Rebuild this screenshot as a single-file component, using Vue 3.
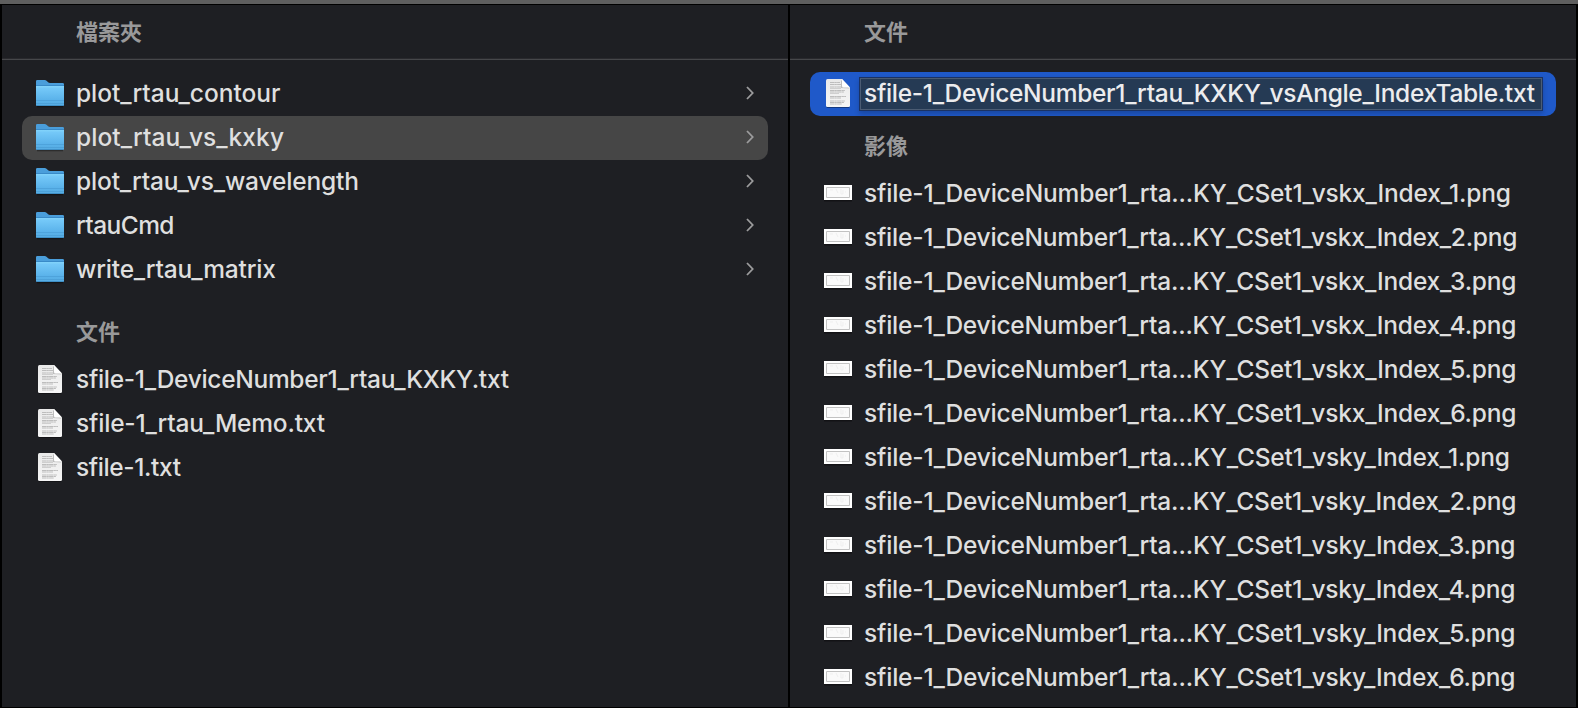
<script setup>
const folders = [
  { name: 'plot_rtau_contour', w: 204.5 },
  { name: 'plot_rtau_vs_kxky', w: 208, active: true },
  { name: 'plot_rtau_vs_wavelength', w: 283 },
  { name: 'rtauCmd', w: 98.5 },
  { name: 'write_rtau_matrix', w: 200 },
]
const documents = [
  { name: 'sfile-1_DeviceNumber1_rtau_KXKY.txt', w: 433 },
  { name: 'sfile-1_rtau_Memo.txt', w: 249 },
  { name: 'sfile-1.txt', w: 105 },
]
const selected = { name: 'sfile-1_DeviceNumber1_rtau_KXKY_vsAngle_IndexTable.txt', w: 671 }
const images = ['vskx', 'vsky'].flatMap((axis) =>
  [1, 2, 3, 4, 5, 6].map((n) => ({
    name: `sfile-1_DeviceNumber1_rta...KY_CSet1_${axis}_Index_${n}.png`,
    w: (n === 1 ? 647 : n === 2 ? 653.5 : 652.5) - (axis === 'vsky' ? 1 : 0),
  })),
)
</script>

<template>
  <div class="window">
    <svg class="defs" width="0" height="0" aria-hidden="true">
      <defs>
        <linearGradient id="front" x1="0" y1="0" x2="0" y2="1">
          <stop offset="0" stop-color="#83d4fb" />
          <stop offset=".12" stop-color="#74c8f8" />
          <stop offset=".7" stop-color="#5ab2ea" />
          <stop offset="1" stop-color="#57ace2" />
        </linearGradient>
        <linearGradient id="paper" x1="0" y1="0" x2="0" y2="1">
          <stop offset="0" stop-color="#e9e9e9" />
          <stop offset="1" stop-color="#f6f6f6" />
        </linearGradient>
        <symbol id="folder" viewBox="0 0 28 28">
          <path d="M1 26.6h26" stroke="#000" stroke-opacity=".35" stroke-width="1.4" />
          <path d="M0 1.3Q0 0 1.3 0h7.4q1 0 1.8.7l1.6 1.5q.8.8 2 .8h12.6Q28 3 28 4.3V10H0z" fill="#4a9edb" />
          <path d="M0 6h28v18.8q0 1.2-1.2 1.2H1.2Q0 26 0 24.800z" fill="url(#front)" />
          <path d="M0 5.5h28" stroke="#398ac8" />
          <path d="M0 20.5h28M0 23.500h28" stroke="#4598cf" stroke-opacity=".55" />
          <path d="M.5 25.500h27" stroke="#3f8fc6" />
        </symbol>
        <symbol id="doc" viewBox="0 0 24 29">
          <path d="M.7 28.400h22.600" stroke="#000" stroke-opacity=".4" />
          <path d="M0 1.500Q0 0 1.500 0H16l8 8.500v18q0 1.500-1.500 1.500h-21Q0 28 0 26.500z" fill="url(#paper)" />
          <path d="M4 3.500h10M4 5.500h11M4 8h11M4 11.500h15M4 13h14M4 17.500h16M4 19h11M4 22h15M4 23.500h14M4 25h12" stroke="#bdbdbd" stroke-dasharray="4 .3 2.500 .3" />
          <path d="M4 9.500h11M4 14.500h9" stroke="#cfcfcf" />
          <path d="M15 1l8.500 8.500L15 9z" fill="#bdbdbd" />
          <path d="M16 0l8 8.500h-6.500Q16 8.500 16 7z" fill="#fff" />
        </symbol>
        <symbol id="image" viewBox="0 0 28 17">
          <path d="M0 15.500h28" stroke="#000" stroke-opacity=".4" stroke-width="2" />
          <path d="M0 0h28v15H0z" fill="#fff" />
          <path d="M2.500 2.500h23v10h-23z" fill="#fafafa" stroke="#c2c2c2" />
          <path d="M6 5h3M12 4l2 4M17 4v5h2v-4M21 7h1" fill="none" stroke="#efefef" />
        </symbol>
      </defs>
    </svg>

    <section class="column left">
      <header>檔案夾</header>
      <div class="rows">
        <div v-for="f in folders" :key="f.name" class="row" :class="{ active: f.active }">
          <svg class="folder"><use href="#folder" /></svg>
          <svg class="name" height="44"><text x="1" y="30" :textLength="f.w">{{ f.name }}</text></svg>
          <svg class="chevron" viewBox="0 0 8 14"><path d="M1 1l5.700 6L1 13" /></svg>
        </div>
      </div>
      <h2>文件</h2>
      <div class="rows flat">
        <div v-for="d in documents" :key="d.name" class="row">
          <svg class="doc"><use href="#doc" /></svg>
          <svg class="name" height="44"><text x="1" y="30" :textLength="d.w">{{ d.name }}</text></svg>
        </div>
      </div>
    </section>

    <section class="column right">
      <header>文件</header>
      <div class="rows">
        <div class="row selected">
          <svg class="doc"><use href="#doc" /></svg>
          <div class="field">
            <svg class="name" height="44"><text x="1" y="30" :textLength="selected.w">{{ selected.name }}</text></svg>
          </div>
        </div>
      </div>
      <h2 class="tight">影像</h2>
      <div class="rows flat">
        <div v-for="i in images" :key="i.name" class="row">
          <svg class="image"><use href="#image" /></svg>
          <svg class="name" height="44"><text x="1" y="30" :textLength="i.w">{{ i.name }}</text></svg>
        </div>
      </div>
    </section>
  </div>
</template>

<style>
body {
  margin: 0;
  background: #000;
}
</style>

<style scoped>
.window {
  box-sizing: border-box;
  display: flex;
  gap: 2px;
  width: 1578px;
  height: 708px;
  padding: 1px 2px 0;
  border-top: 4px solid #5f5f5f;
  background: #000;
  overflow: hidden;
  font-family: Inter, "Noto Sans CJK TC", sans-serif;
}
.defs {
  position: absolute;
}
.column {
  box-sizing: border-box;
  height: 702px;
  background: #1e1f23;
  overflow: hidden;
}
.left {
  width: 786px;
}
.right {
  flex: 1;
}
header {
  box-sizing: border-box;
  height: 55px;
  padding-left: 74px;
  border-bottom: 1px solid #46474a;
  box-shadow: inset 0 -1px #29292d;
  line-height: 50px;
}
header,
h2 {
  color: #99999a;
  font-family: "Noto Sans CJK TC", sans-serif;
  font-size: 22px;
  font-weight: 700;
}
h2 {
  height: 66px;
  margin: 0;
  padding-left: 74px;
  line-height: 77px;
}
h2.tight {
  height: 56px;
  line-height: 56px;
}
.rows {
  padding: 12px 20px 0;
}
.rows.flat {
  padding-top: 0;
}
.row {
  display: flex;
  align-items: center;
  height: 44px;
  border-radius: 10px;
}
.active {
  background: #464646;
}
.selected {
  background: #1f59c9;
}
.name {
  flex: 1;
  margin-left: 11px;
  overflow: visible;
}
.name text {
  fill: #dfdfdf;
  font-size: 24.500px;
  font-weight: 500;
}
.selected .name text {
  fill: #ececee;
}
.folder {
  width: 28px;
  height: 28px;
  margin-left: 14px;
}
.doc {
  width: 24px;
  height: 29px;
  margin: 0 2px 1px 16px;
}
.image {
  width: 28px;
  height: 17px;
  margin: 0 0 1px 14px;
}
.chevron {
  width: 8px;
  height: 14px;
  margin: 0 14px 2px 0;
  fill: none;
  stroke: #9c9c9d;
  stroke-width: 1.800;
}
.field {
  box-sizing: border-box;
  display: flex;
  align-items: center;
  width: 684px;
  height: 34px;
  margin-left: 7px;
  border: 1px solid #1a3264;
  background: #253a54;
  box-shadow: inset 0 0 0 1px #4b5c73, 0 3px 5px #0003;
}
.field .name {
  margin-left: 3px;
}
</style>
